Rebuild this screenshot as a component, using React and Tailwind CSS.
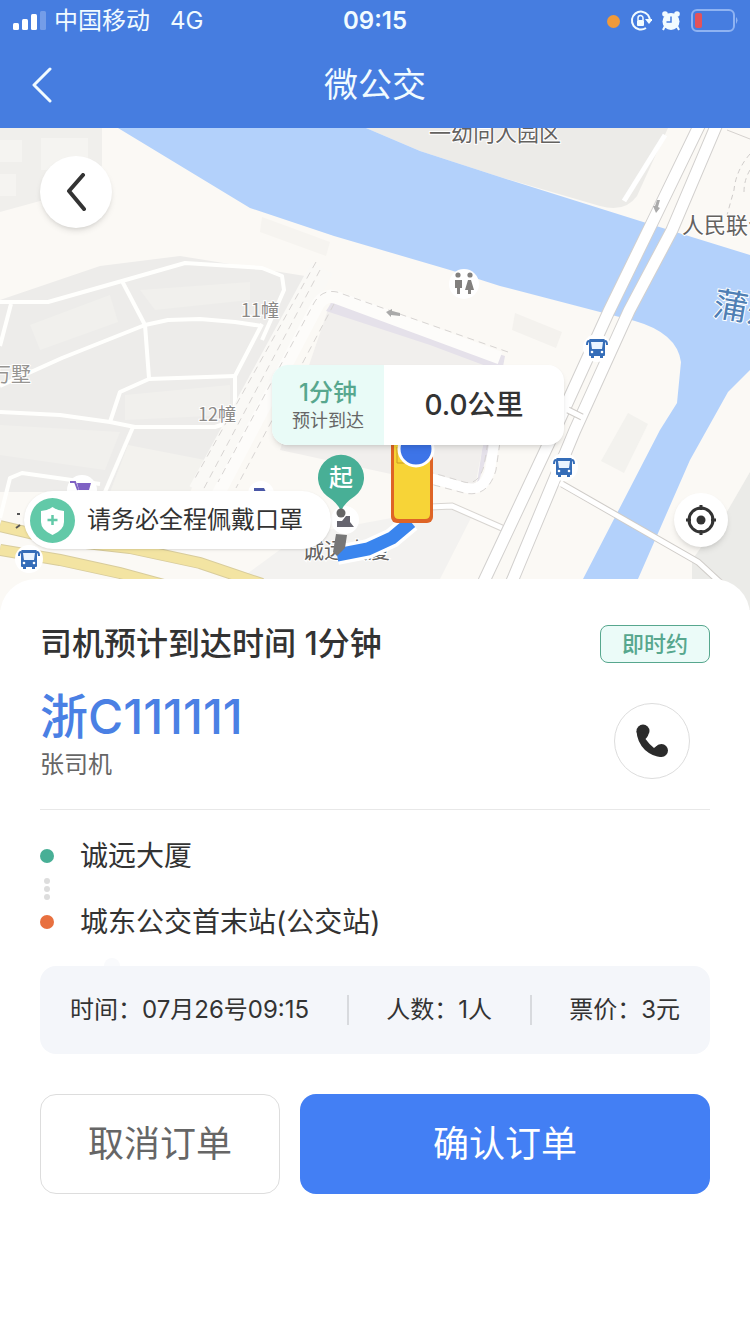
import React, { useState } from 'react';

const tripInfo = [
  { label: '时间', value: '07月26号09:15' },
  { label: '人数', value: '1人' },
  { label: '票价', value: '3元' },
];

// 楼栋之间的小路
const lanes = [
  '0,302 48,302 122,281 185,263 262,268 282,276 284,290 262,340',
  '122,281 145,325 149,378',
  '0,386 62,358 145,325 168,320 200,319 235,322 262,326',
  '11,304 0,346',
  '0,412 60,415 110,422 135,427 215,427 230,422 235,405 235,376 262,324',
  '235,376 149,379 120,392 110,422',
  '133,427 105,492',
  '0,518 10,478 22,473 100,484',
];

const bridgeRoads = [
  '700,124 652,223 609,311 548,445 485,579 470,612',
  '717,124 672,230 629,311 575,430 513,579 498,612',
];

const BusStop = ({ x, y }) => (
  <g transform={`translate(${x} ${y})`}>
    <circle r="14" fill="#fff" />
    <path
      d="M-7-9h14q1 0 1 2V7q0 1-1 1h-1v2h-3V8h-6v2h-3V8h-1q-1 0-1-1V-7q0-2 1-2Z"
      fill="#356db8"
    />
    <path d="M-6-6H6L5 1H-5Z" fill="#eaf4ff" />
    <path d="M-8-7q-2 0-2 4M8-7q2 0 2 4" fill="none" stroke="#356db8" strokeWidth="2" />
    <circle cx="-5" cy="4" r="1.3" fill="#fff" />
    <circle cx="5" cy="4" r="1.3" fill="#fff" />
  </g>
);

const MapView = () => (
  <svg
    className="block h-full w-full"
    viewBox="0 128 750 482"
    preserveAspectRatio="xMidYMin slice"
    role="img"
    aria-label="地图"
    fontFamily="'Noto Sans CJK SC', sans-serif"
  >
    <rect y="128" width="750" height="482" fill="#fbf9f5" />

    {/* 街区 */}
    <path d="M0 128H102V165Q100 185 80 190L0 212Z" fill="#f0efec" />
    <path d="M0 140H22V162H0ZM41 138H88V170H41ZM0 174H16V196H0Z" fill="#f5f4f1" />
    <path d="M0 300L100 266L180 256L305 276L188 492H0Z" fill="#edecea" />
    <path d="M30 325L110 295L118 322L40 350ZM140 290L250 282L250 300L155 310ZM125 395L230 385V415L125 420ZM0 425L120 432L105 470L0 455Z" fill="#f1f0ed" />
    <path d="M128 445L205 460L190 492H110Z" fill="#f3f2ee" />
    <path d="M262 217L330 242L326 256L260 232Z" fill="#f6f4f0" />
    <path d="M515 313L562 332L556 348L512 330Z" fill="#f4f2ee" />
    <path d="M628 413L648 424L624 473L601 461Z" fill="#f3f2ee" />
    <path d="M332 298L500 356L474 492L280 450Z" fill="#f1efed" />
    <path d="M334 299L505 356L502 372L430 345L326 311Z" fill="#e5e1ea" />
    <path d="M482 450L500 372L492 440L476 490Z" fill="#e5e1ea" />
    <path d="M445 508L474 512L440 579H240L300 535Z" fill="#f3f2f0" />
    <path d="M750 472L728 510L692 560V610H750Z" fill="#ebebe8" />
    <path d="M366 128L420 151L500 177L600 206Q625 213 637 196L668 128Z" fill="#ecebe8" />

    {/* 河道 */}
    <path
      d="M118 128L250 208L334 236L450 270L500 286L600 312L635 321Q677 333 681 362L677 403L660 430L583 579L568 610H622L638 579L690 460L728 392L750 370V255L640 221L500 177L420 151L366 128Z"
      fill="#b3d1fb"
    />
    <path d="M665 135L624 201" stroke="#fff" strokeWidth="5" />

    {lanes.map((points) => (
      <polyline key={points} points={points} fill="none" stroke="#fffffd" strokeWidth="4" strokeLinejoin="round" />
    ))}

    {/* 中间主路 */}
    <path d="M322 268L200 492" stroke="#faf9f6" strokeWidth="24" />
    <path d="M500 358L335 297Q325 294 318 304L215 500" fill="none" stroke="#fdfcfa" strokeWidth="13" />
    <path
      d="M316 262L194 480M320 270L202 492M508 352L337 292Q322 289 314 303L218 482M334 304L236 488"
      fill="none"
      stroke="#d8d5d3"
      strokeWidth="1"
      strokeDasharray="7 5"
    />
    <path d="M505 370L490 470Q484 492 466 488L430 478" fill="none" stroke="#fff" strokeWidth="10" />
    <path d="M510 372L496 470Q488 498 464 493L430 484M499 372L484 466Q478 486 464 482L430 472" fill="none" stroke="#d8d5d3" strokeDasharray="7 5" />
    <path d="M430 507L452 506L502 528" fill="none" stroke="#d8d5d1" strokeWidth="7" />
    <path d="M430 507L452 506L502 528" fill="none" stroke="#fff" strokeWidth="5" />

    {/* 跨河大桥 */}
    {bridgeRoads.map((points) => (
      <g key={points} fill="none">
        <polyline points={points} stroke="#d2d0ce" strokeWidth="13" />
        <polyline points={points} stroke="#fff" strokeWidth="11" />
      </g>
    ))}
    <path d="M568 410L582 417M562 484L698 562L724 586" fill="none" stroke="#cfccc8" strokeWidth="7" />
    <path d="M566 409L584 418M560 483L698 562L724 586" fill="none" stroke="#fff" strokeWidth="5" />
    <path d="M727 130L750 139" stroke="#d5d2ce" strokeWidth="1" />
    <path d="M750 154Q736 170 734 190L727 215M750 170Q744 180 744 192" fill="none" stroke="#cfccca" strokeDasharray="5 4" />

    {/* 黄色主干道 */}
    <g fill="none">
      <path d="M0 526L60 540L130 548L200 563L262 584" stroke="#d8cc9c" strokeWidth="12" />
      <path d="M0 526L60 540L130 548L200 563L262 584" stroke="#f3e4a2" strokeWidth="10" />
      <path d="M0 550L60 560L120 573L175 588" stroke="#d8cc9c" strokeWidth="12" />
      <path d="M0 550L60 560L120 573L175 588" stroke="#f3e4a2" strokeWidth="10" />
    </g>

    {/* 行驶方向箭头 */}
    <path d="M386 312L392 309V311L400 313V316L391 315V317ZM656 213L653 206H655L657 200H660L658 207L660 208Z" fill="#aaa" />

    {/* 地名 */}
    <g stroke="#fff" strokeWidth="2" paintOrder="stroke" fontSize="20">
      <text x="429" y="141" fontSize="22" fill="#64625f">一幼向人园区</text>
      <text x="682" y="233" fontSize="22" fill="#64625f">人民联合</text>
      <text x="-9" y="382" fill="#969491">万墅</text>
      <text x="241" y="317" fontSize="18" fill="#8c8a88">11幢</text>
      <text x="198" y="421" fontSize="18" fill="#8c8a88">12幢</text>
      <text x="302" y="558" fontSize="22" fill="#64625f">诚远大厦</text>
      <text x="712" y="315" fontSize="34" fill="#4f7fb5" transform="rotate(10 712 315)">蒲州河</text>
    </g>
    <path d="M17 514H20M16 528L20 525" stroke="#555" strokeWidth="2" />

    {/* 兴趣点 */}
    <circle cx="464" cy="284" r="15" fill="#fff" />
    <g fill="#82807e">
      <circle cx="458" cy="275" r="2.6" />
      <path d="M455 280H462V288H460V294H457V288H455Z" />
      <circle cx="470" cy="275" r="2.6" />
      <path d="M468 280H471L474 290H471V294H468V290H465Z" />
    </g>
    <circle cx="82" cy="490" r="15" fill="#fff" />
    <path d="M70 482H75L78 490" fill="none" stroke="#7f62c4" strokeWidth="2" />
    <path d="M77 483H91L89 490H79Z" fill="#7f62c4" />
    <circle cx="261" cy="494" r="13" fill="#fff" />
    <path d="M254 488H264L267 494H254Z" fill="#4a58a8" />
    <circle cx="345" cy="520" r="14" fill="#fff" />
    <path d="M337 527V521H342L346 516H350V522L354 527Z" fill="#66656f" />
    <BusStop x={597} y={348} />
    <BusStop x={564} y={467} />
    <BusStop x={29} y={559} />

    {/* 行驶路线 */}
    <path d="M337 555L368 549L392 538L411 522" fill="none" stroke="#fff" strokeWidth="20" />
    <path d="M337 555L368 549L392 538L411 522" fill="none" stroke="#3a85ee" strokeWidth="13" />
    <path d="M336 534L347 535L345 548L337 556L333 552Z" fill="#777" />

    {/* 起点 */}
    <path d="M341 512Q339 504 327 496A23 23 0 1 1 355 496Q343 504 341 512Z" fill="#48af96" />
    <circle cx="341" cy="513" r="4.500" fill="#666" />
    <text x="341" y="486" fontSize="24" fontWeight="500" fill="#fff" textAnchor="middle">起</text>

    {/* 车辆 */}
    <rect x="391" y="400" width="42" height="123" rx="6" fill="#de6426" />
    <path d="M394 430H430V514Q430 519 425 519H399Q394 519 394 514Z" fill="#f7d437" />
    <path d="M397 447V463H427V447" fill="none" stroke="#c99a25" />
    <circle cx="416" cy="449" r="17" fill="#3d74e8" stroke="#fff" strokeWidth="3" />
  </svg>
);

const StatusBar = () => (
  <div className="grid h-10 grid-cols-3 items-center px-3 pt-[2px] text-[#f1fbff]">
    <div className="flex items-center gap-2 text-[24px] leading-8">
      <svg width="34" height="20" viewBox="0 0 34 20" fill="#fff">
        <rect x="1" y="12" width="6" height="7" rx="1.500" />
        <rect x="10" y="8" width="6" height="11" rx="1.500" />
        <rect x="19" y="3" width="6" height="16" rx="1.500" />
        <rect x="28" y="0" width="6" height="19" rx="1.500" opacity=".25" />
      </svg>
      <span>中国移动</span>
      <span className="ml-3">4G</span>
    </div>
    <div className="text-center text-[24px] leading-8 font-semibold">09:15</div>
    <div className="flex items-center justify-end gap-[10px]">
      <span className="size-[13px] rounded-full bg-[#f09a3a]" />
      <svg width="22" height="22" viewBox="0 0 22 22" fill="none" stroke="#f1fbff" strokeWidth="2">
        <path d="M18 5A9 9 0 1 0 16 18M18 5Q20 8 20 11" />
        <path d="M15 9H23L19 14Z" fill="#f1fbff" stroke="none" />
        <path d="M8 10V8a2.500 2.500 0 0 1 5 0v2" strokeWidth="1.500" />
        <rect x="7" y="10" width="7" height="6" rx="1" fill="#f1fbff" stroke="none" />
      </svg>
      <svg width="18" height="20" viewBox="0 0 18 20" fill="#f1fbff">
        <circle cx="9" cy="10.500" r="8.500" />
        <circle cx="3" cy="3" r="2.800" />
        <circle cx="15" cy="3" r="2.800" />
        <path d="M3 15l-2 4M15 15l2 4" stroke="#f1fbff" strokeWidth="2" />
        <path d="M9 5.500V11H4.500" fill="none" stroke="#467de0" strokeWidth="1.500" />
      </svg>
      <svg width="48" height="24" viewBox="0 0 48 24" fill="none">
        <rect x="2" y="1" width="42" height="21" rx="5" stroke="#8fb3f2" strokeWidth="2" />
        <rect x="5" y="4" width="7" height="15" rx="2" fill="#e5525a" />
        <path d="M46 8Q49 11 46 15Z" fill="#8fb3f2" />
      </svg>
    </div>
  </div>
);

const App = () => {
  const [confirmed, setConfirmed] = useState(false);

  return (
    <div className="min-h-screen bg-white font-['Inter','Noto_Sans_CJK_SC',sans-serif] text-[#333]">
      <header className="bg-[#467de0] text-[#f1fbff]">
        <StatusBar />
        <div className="grid h-[88px] grid-cols-3 items-center pt-[2px]">
          <button type="button" aria-label="返回" className="ml-7 w-fit p-1">
            <svg width="20" height="36" viewBox="0 0 20 36" fill="none" stroke="currentColor" strokeWidth="3">
              <path d="M18 2L2 18L18 34" strokeLinecap="round" strokeLinejoin="round" />
            </svg>
          </button>
          <h1 className="text-center text-[34px] leading-10">微公交</h1>
        </div>
      </header>

      <main>
        <section className="relative h-[482px] overflow-hidden">
          <MapView />

          <button
            type="button"
            aria-label="返回上一页"
            className="absolute top-7 left-10 flex size-[72px] items-center justify-center rounded-full bg-white shadow-md"
          >
            <svg width="20" height="38" viewBox="0 0 20 38" fill="none" stroke="#333" strokeWidth="4">
              <path d="M17 2L3 18L18 36" strokeLinecap="round" strokeLinejoin="round" />
            </svg>
          </button>

          {/* 预计到达气泡 */}
          <div className="absolute top-[237px] left-1/2 ml-[-103px] flex h-20 w-[292px] overflow-hidden rounded-2xl bg-white shadow-md">
            <div className="flex w-28 flex-col items-center justify-center bg-[#e9fbf7]">
              <strong className="text-[24px] leading-8 font-medium text-[#57a78e]">1分钟</strong>
              <span className="text-[18px] leading-6 text-[#666]">预计到达</span>
            </div>
            <div className="flex flex-1 items-center justify-center text-[28px] font-medium">0.0公里</div>
          </div>

          <div className="absolute inset-x-0 top-[363px] flex items-center justify-between pr-[22px] pl-6">
            <div className="flex h-[58px] items-center gap-3 rounded-full bg-white pr-7 pl-[6px] shadow-sm">
              <svg width="45" height="45" viewBox="0 0 45 45">
                <circle cx="22.500" cy="22.500" r="22.500" fill="#62c9a8" />
                <path d="M22.500 9Q28 13 34 13V24Q34 32 22.500 37Q11 32 11 24V13Q17 13 22.500 9Z" fill="#fff" />
                <path d="M22.500 17V27M17.500 22H27.500" stroke="#62c9a8" strokeWidth="2.500" />
              </svg>
              <p className="text-[24px] leading-8">请务必全程佩戴口罩</p>
            </div>
            <button
              type="button"
              aria-label="定位"
              className="flex size-[54px] items-center justify-center rounded-full bg-white shadow-md"
            >
              <svg width="30" height="30" viewBox="0 0 30 30" fill="none" stroke="#333" strokeWidth="3">
                <circle cx="15" cy="15" r="12" />
                <circle cx="15" cy="15" r="4.500" fill="#333" stroke="none" />
                <path d="M15 0V5M15 25V30M0 15H5M25 15H30" />
              </svg>
            </button>
          </div>
        </section>

        {/* 订单信息 */}
        <section className="relative -mt-[31px] rounded-t-[36px] bg-white px-10 pt-[46px] pb-10">
          <div className="flex items-center justify-between">
            <h2 className="text-[32px] leading-9 font-medium">司机预计到达时间 1分钟</h2>
            <span className="flex h-[38px] w-[110px] items-center justify-center rounded-lg border border-[#57a78e] bg-[#ebfbf8] text-[22px] font-medium text-[#57a78e]">
              即时约
            </span>
          </div>

          <div className="flex items-center justify-between border-b border-[#e8e8e8] pt-6 pr-5 pb-[26px]">
            <div>
              <p className="text-[48px] leading-[60px] font-medium text-[#4a80e4]">浙C111111</p>
              <p className="text-[24px] leading-9 text-[#666]">张司机</p>
            </div>
            <a
              href="tel:111111"
              aria-label="联系司机"
              className="mt-3 flex size-[76px] items-center justify-center rounded-full border border-[#ddd]"
            >
              <svg width="32" height="34" viewBox="0 0 32 34" fill="#2b2b2b">
                <circle cx="7" cy="7" r="6.500" />
                <circle cx="25.500" cy="26.500" r="6.500" />
                <path d="M.5 7Q1 18 9 26Q17 33 25.500 33L23 20.500Q20 22 18 24Q13 20 9.500 15Q11 14 12.500 10.500Z" />
              </svg>
            </a>
          </div>

          <ul className="pt-6 text-[28px]">
            <li className="flex h-11 items-center gap-[26px]">
              <span className="size-[14px] rounded-full bg-[#48af96]" />
              诚远大厦
            </li>
            <li className="flex h-[22px] w-[14px] flex-col items-center justify-between" aria-hidden="true">
              <span className="size-[6px] shrink-0 rounded-full bg-[#ddd]" />
              <span className="size-[6px] shrink-0 rounded-full bg-[#ddd]" />
              <span className="size-[6px] shrink-0 rounded-full bg-[#ddd]" />
            </li>
            <li className="flex h-11 items-center gap-[26px]">
              <span className="size-[14px] rounded-full bg-[#e8703f]" />
              城东公交首末站(公交站)
            </li>
          </ul>

          <div className="relative mt-[22px]">
            <span className="absolute -top-2 left-16 size-4 rounded-full bg-[#f9fafc]" />
            <dl className="relative flex h-[88px] items-center justify-between rounded-2xl bg-[#f4f6fa] px-[30px] text-[24px] leading-8">
              {tripInfo.map((item, i) => (
                <React.Fragment key={item.label}>
                  {i > 0 && <div className="h-[30px] w-[2px] bg-[#d8dade]" />}
                  <div className="flex">
                    <dt>{item.label}：</dt>
                    <dd>{item.value}</dd>
                  </div>
                </React.Fragment>
              ))}
            </dl>
          </div>

          <div className="mt-10 flex gap-5">
            <button
              type="button"
              onClick={() => setConfirmed(false)}
              className="h-[100px] w-60 rounded-2xl border border-[#ddd] text-[36px] text-[#666]"
            >
              取消订单
            </button>
            <button
              type="button"
              disabled={confirmed}
              onClick={() => setConfirmed(true)}
              className="h-[100px] flex-1 rounded-2xl bg-[#437ff4] text-[36px] text-white"
            >
              确认订单
            </button>
          </div>
        </section>
      </main>
    </div>
  );
};

export default App;
